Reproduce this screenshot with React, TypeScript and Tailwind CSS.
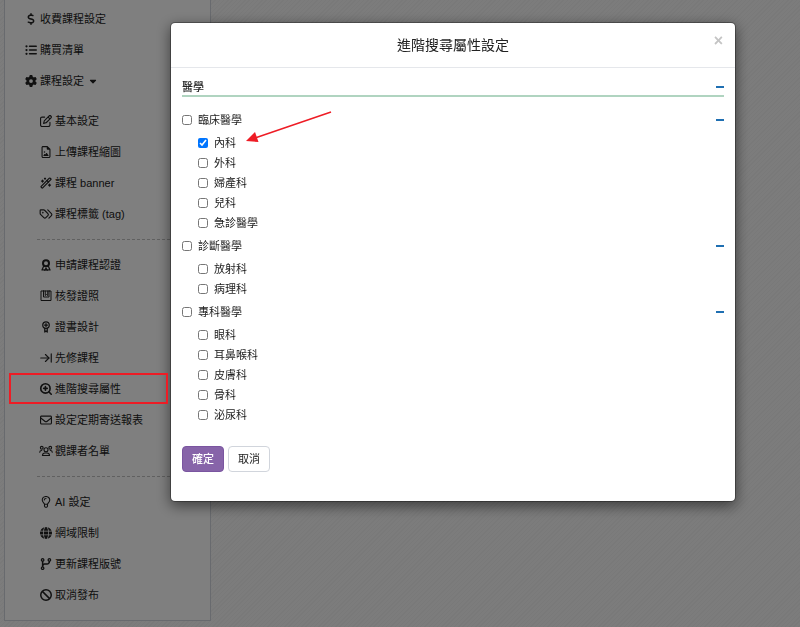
import type { ReactNode } from 'react';
import {
  FaBan,
  FaCaretDown,
  FaCodeBranch,
  FaDollarSign,
  FaGear,
  FaGlobe,
  FaListUl,
  FaRegEnvelope,
  FaRegFileImage,
  FaRegPenToSquare,
} from 'react-icons/fa6';
import { LuArrowRightToLine, LuTags, LuWandSparkles, LuZoomIn } from 'react-icons/lu';

type MenuEntry = {
  name: string;
  icon: ReactNode;
  marked?: boolean;
};

const LineIcon = ({ children }: { children: ReactNode }) => (
  <svg
    viewBox="0 0 24 24"
    className="size-3"
    fill="none"
    stroke="currentColor"
    strokeWidth="2"
    strokeLinecap="round"
    strokeLinejoin="round"
    aria-hidden="true"
  >
    {children}
  </svg>
);

const AwardIcon = () => (
  <LineIcon>
    <circle cx="12" cy="8.5" r="6" strokeWidth="4" />
    <path d="M7 15l-3 7 4-.5 2 1.500 2-5 2 5 2-1.500 4 .5-3-7" strokeWidth="2.500" />
  </LineIcon>
);

const BookmarkIcon = () => (
  <LineIcon>
    <path d="M7 2H2v19h20V2h-3M7 2h12M7 2v12h11V2M10.500 2v9l2.500-2 2.500 2V2" />
  </LineIcon>
);

const CertificateIcon = () => (
  <LineIcon>
    <circle cx="12" cy="8" r="6.500" strokeWidth="2.500" />
    <path d="M12 5v6M9 8h6M9.500 14.500V22l2.500-2 2.500 2v-7.500" strokeWidth="2.500" />
  </LineIcon>
);

const BulbIcon = () => (
  <LineIcon>
    <path
      d="M9 16.500c0-2.500-4.500-4-4.500-8.500a7.500 7 0 0 1 15 0c0 4.500-4.500 6-4.500 8.500zM9 17v3.500l1.500 2h3l1.500-2V17M8.500 8A3.500 3 0 0 1 12 5"
      strokeWidth="2.200"
    />
  </LineIcon>
);

const UsersIcon = () => (
  <svg
    viewBox="0 0 28 24"
    className="h-3 w-3.5"
    fill="none"
    stroke="currentColor"
    strokeWidth="2.2"
    strokeLinecap="round"
    aria-hidden="true"
  >
    <circle cx="14" cy="9.500" r="4" />
    <circle cx="5.500" cy="5.500" r="2.800" />
    <circle cx="22.500" cy="5.500" r="2.800" />
    <path d="M7 21c0-3.500 2.500-5 5-5h4c2.500 0 5 1.500 5 5zM1.500 14.500c0-2.500 1.500-3.500 4-3.500M26.500 14.500c0-2.500-1.500-3.500-4-3.500" />
  </svg>
);

const mainMenu: MenuEntry[] = [
  { name: '收費課程設定', icon: <FaDollarSign className="size-3" /> },
  { name: '購買清單', icon: <FaListUl className="size-3" /> },
];

const subMenu: MenuEntry[][] = [
  [
    { name: '基本設定', icon: <FaRegPenToSquare className="size-3" /> },
    { name: '上傳課程縮圖', icon: <FaRegFileImage className="size-3" /> },
    { name: '課程 banner', icon: <LuWandSparkles className="size-3" strokeWidth="2.5" /> },
    { name: '課程標籤 (tag)', icon: <LuTags className="size-3.5" /> },
  ],
  [
    { name: '申請課程認證', icon: <AwardIcon /> },
    { name: '核發證照', icon: <BookmarkIcon /> },
    { name: '證書設計', icon: <CertificateIcon /> },
    { name: '先修課程', icon: <LuArrowRightToLine className="size-3.5" /> },
    {
      name: '進階搜尋屬性',
      icon: <LuZoomIn className="size-3.5" strokeWidth="2.8" />,
      marked: true,
    },
    { name: '設定定期寄送報表', icon: <FaRegEnvelope className="size-3" /> },
    { name: '觀課者名單', icon: <UsersIcon /> },
  ],
  [
    { name: 'AI 設定', icon: <BulbIcon /> },
    { name: '網域限制', icon: <FaGlobe className="size-3" /> },
    { name: '更新課程版號', icon: <FaCodeBranch className="size-3" /> },
    { name: '取消發布', icon: <FaBan className="size-3" /> },
  ],
];

const groups = [
  { name: '臨床醫學', items: ['內科', '外科', '婦產科', '兒科', '急診醫學'] },
  { name: '診斷醫學', items: ['放射科', '病理科'] },
  { name: '專科醫學', items: ['眼科', '耳鼻喉科', '皮膚科', '骨科', '泌尿科'] },
];

const MenuLink = ({ entry }: { entry: MenuEntry }) => (
  <a href="#" className="flex items-center gap-0.5">
    <span className="flex w-3.5 shrink-0 justify-center">{entry.icon}</span>
    {entry.name}
  </a>
);

const CollapseButton = () => (
  <button type="button" aria-label="收合" className="flex h-4 w-2 items-center">
    <span className="h-0.5 w-full bg-[#1f6fb2]" />
  </button>
);

const Sidebar = () => (
  <nav className="-mt-1.5 ml-1 w-[207px] border border-gray-300 bg-white pt-2">
    <ul className="pl-[19px]">
      {mainMenu.map((entry) => (
        <li key={entry.name} className="flex h-[31px] items-center">
          <MenuLink entry={entry} />
        </li>
      ))}
      <li className="flex h-[31px] items-center">
        <button type="button" className="flex items-center gap-0.5">
          <span className="flex w-3.5 justify-center">
            <FaGear className="size-3" />
          </span>
          課程設定
          <FaCaretDown className="ml-0.5 size-2.5" />
        </button>
      </li>
    </ul>
    <div className="divide-y divide-dashed divide-[#c0c0c0] pl-8">
      {subMenu.map((list, index) => (
        <ul key={index} className="pt-[9px] pb-2.5">
          {list.map((entry) => (
            <li key={entry.name} className="relative flex h-[31px] items-center pl-0.5">
              <MenuLink entry={entry} />
              {entry.marked && (
                <span className="absolute inset-y-0 right-[42px] -left-7 z-20 border-2 border-[#ee1c25]" />
              )}
            </li>
          ))}
        </ul>
      ))}
    </div>
  </nav>
);

const Arrow = () => (
  <svg
    viewBox="0 0 86 32"
    className="absolute bottom-2 left-full ml-2.5 h-8 w-[86px] max-w-none"
    aria-hidden="true"
  >
    <path d="M85 1L9 27" stroke="#ee1c25" strokeWidth="1.500" />
    <path d="M0 30L9 21L12.500 31z" fill="#ee1c25" />
  </svg>
);

const SearchDialog = () => (
  <div
    role="dialog"
    aria-labelledby="dialog-title"
    className="rounded-[5px] border border-black/30 bg-white bg-clip-padding shadow-[0_4px_14px_rgba(0,0,0,0.5)]"
  >
    <header className="relative flex h-[45px] items-center justify-center border-b border-gray-200">
      <h1 id="dialog-title" className="text-sm">
        進階搜尋屬性設定
      </h1>
      <button
        type="button"
        aria-label="關閉"
        className="absolute top-2 right-3 text-base leading-5 font-bold text-[#c4c4c4]"
      >
        ×
      </button>
    </header>
    <form className="px-[11px] pt-[11px] pb-[29px]">
      <div className="mb-2.5 flex h-[18px] items-center justify-between border-b-2 border-[#b0d4c0]">
        <h2 className="font-medium">醫學</h2>
        <CollapseButton />
      </div>
      {groups.map((group) => (
        <fieldset key={group.name}>
          <div className="flex h-[26px] items-center justify-between">
            <label className="flex items-center gap-1.5">
              <input type="checkbox" className="size-2.5" />
              {group.name}
            </label>
            <CollapseButton />
          </div>
          <ul className="pl-4">
            {group.items.map((item) => (
              <li key={item} className="flex h-5 items-center">
                <label className="relative flex items-center gap-1.5">
                  <input
                    type="checkbox"
                    defaultChecked={item === '內科'}
                    className="size-2.5"
                  />
                  {item}
                  {item === '內科' && <Arrow />}
                </label>
              </li>
            ))}
          </ul>
        </fieldset>
      ))}
      <div className="mt-[21px] flex gap-1">
        <button
          type="submit"
          className="h-[26px] rounded-sm border border-[#7a55a0] bg-[#8764a9] px-[9px] font-medium text-white"
        >
          確定
        </button>
        <button
          type="button"
          className="h-[26px] rounded-sm border border-gray-300 bg-white px-[9px]"
        >
          取消
        </button>
      </div>
    </form>
  </div>
);

export default function App() {
  return (
    <div className="min-h-screen bg-[repeating-linear-gradient(135deg,#f8f8f8_0_2px,#f2f2f2_2px_3px)] font-['Liberation_Sans','Noto_Sans_CJK_TC',sans-serif] text-[11px] leading-4 text-[#222]">
      <div className="flow-root">
        <Sidebar />
      </div>
      <div className="fixed inset-0 z-10 overflow-y-auto bg-black/50 pt-[22px] pr-16 pl-[170px]">
        <SearchDialog />
      </div>
    </div>
  );
}
